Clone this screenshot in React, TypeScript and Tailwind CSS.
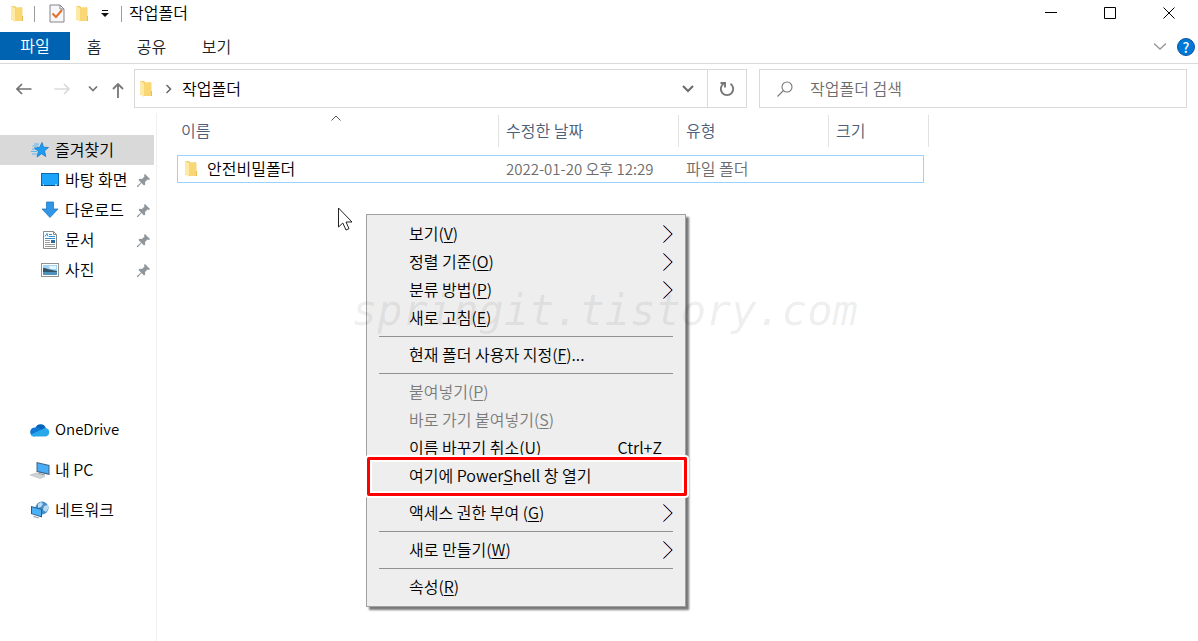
import type { ReactNode } from "react";

function Folder() {
  return (
    <svg width="14" height="18" viewBox="0 0 14 18" className="shrink-0" aria-hidden="true">
      <path d="M1 1h4l1 1h6v13H1z" fill="#f4cf6c" />
      <path d="M6 2h5v9H6z" fill="#fae29b" />
      <path d="M1 1l4 2v14l-4-3z" fill="#ffe9a6" />
      <path d="M5 6c0-2 1-3 2-3h5.500v13H5z" fill="#f9d775" />
      <path d="M12 11h1v5h-1z" fill="#e9bd55" />
    </svg>
  );
}

function Pin() {
  return (
    <svg width="13" height="13" viewBox="0 0 13 13" className="shrink-0" aria-hidden="true">
      <path d="M8 0l5 5-1 1-1.500-.5L8 8l.3 2.500L7 11.500 4.500 9 1 13H0v-1l4-3.500L1.500 6l1-1.300L5 5l2.500-2.500L7 1z" fill="#8f969c" />
    </svg>
  );
}

function Star() {
  return (
    <svg width="18" height="16" viewBox="0 0 18 16" aria-hidden="true">
      <path d="M3 2h5M1.500 4h6M1 7h4.500M0 9.500h6M1 12h5" stroke="#5db7ef" />
      <path d="M11 .5l1.500 4.700 5 .3-4 3.200 1.300 5.800-4.300-2.800L6 15l1.500-5.500L3.500 6l5-.5z" fill="#1e9df0" stroke="#1678c8" strokeWidth=".8" />
    </svg>
  );
}

function Desktop() {
  return (
    <svg width="18" height="14" viewBox="0 0 18 14" aria-hidden="true">
      <rect x=".5" y=".5" width="17" height="12" fill="#1ca4fb" stroke="#0d67ad" />
      <path d="M0 12h18v1H0z" fill="#0a4a86" />
      <path d="M2 12h1M14 12h2" stroke="#fff" />
    </svg>
  );
}

function Download() {
  return (
    <svg width="18" height="18" viewBox="0 0 18 18" aria-hidden="true">
      <path d="M5.500 1h7v7H17l-8 8.500L1 8h4.500z" fill="#3096e8" stroke="#2478bd" strokeWidth=".8" />
    </svg>
  );
}

function Doc() {
  return (
    <svg width="18" height="18" viewBox="0 0 18 18" aria-hidden="true">
      <path d="M2.500.5h10l3 3v14h-13z" fill="#fff" stroke="#8a8a8a" />
      <path d="M12.500.5v3h3" fill="none" stroke="#8a8a8a" />
      <path d="M4 5.500l2-3 1 3M8 3.500h3M4 7.500h10M8 5.500h6" fill="none" stroke="#2d8fd8" />
      <path d="M4 9.500h5M4 11.500h5M4 13.500h10M4 15.500h10" stroke="#9a9a9a" />
      <path d="M10 9h4v3h-4z" fill="#27689f" />
    </svg>
  );
}

function Picture() {
  return (
    <svg width="18" height="14" viewBox="0 0 18 14" aria-hidden="true">
      <rect x=".5" y=".5" width="17" height="13" fill="#fff" stroke="#929292" />
      <path d="M2 2h14v10H2z" fill="#9fd4f6" />
      <path d="M8 3h7v3H9z" fill="#e8f5fd" />
      <path d="M2 5c4 0 6 2 14 3v1H2z" fill="#31566b" />
      <path d="M2 9h14v3H2z" fill="#4f93bd" />
    </svg>
  );
}

function Cloud() {
  return (
    <svg width="20" height="14" viewBox="0 0 20 14" aria-hidden="true">
      <path d="M5.500 4.500A5.500 5.500 0 0 1 15.800 5L11 9z" fill="#0364b8" />
      <path d="M4 13.500A4.500 4.500 0 0 1 5.500 4.500c2-.6 3.500.2 5 1.300L15 9 4 13.500z" fill="#0f78d4" />
      <path d="M15.500 5a4.300 4.300 0 0 1 0 8.500H4c-1.500 0-2.700-.8-3.300-2L12 6.500A5 5 0 0 1 15.500 5z" fill="#28a8ea" />
    </svg>
  );
}

function Computer() {
  return (
    <svg width="20" height="18" viewBox="0 0 20 18" aria-hidden="true">
      <path d="M6.500 1l13 3v10l-13-3z" fill="#44627c" />
      <path d="M7.500 2.200l11 2.600v7.800l-11-2.600z" fill="#49acf7" />
      <path d="M9 12l6 1.500v1L8 13z" fill="#8d979e" />
      <path d="M0 14l6-2 9 3.500L10 17.500z" fill="#d0d3d5" stroke="#aeb2b5" strokeWidth=".5" />
    </svg>
  );
}

function Network() {
  return (
    <svg width="20" height="18" viewBox="0 0 20 18" aria-hidden="true">
      <circle cx="12" cy="7" r="6.500" fill="#4a8dc7" />
      <path d="M8 3l3-2 2 2-2 3-3 1zM14 5l4-1v4l-2 3-3-2z" fill="#b7dbf3" />
      <path d="M1 5l11 3v8.500L1 13z" fill="#2b5c86" />
      <path d="M2 6.200l9 2.500v6.500l-9-2.800z" fill="#4ab0f8" />
      <path d="M4 15l5 1.500v1L3 16z" fill="#9aa2a8" />
    </svg>
  );
}

function SideItem({ icon, label, pinned, className }: { icon: ReactNode; label: string; pinned?: boolean; className: string }) {
  return (
    <li>
      <a href="#" className={`mr-[2px] flex items-center ${className}`}>
        <span className="flex w-5 shrink-0 justify-center">{icon}</span>
        <span className="ml-[5px] flex-1 pb-[2px] whitespace-nowrap">{label}</span>
        {pinned && <Pin />}
      </a>
    </li>
  );
}

type Entry = { text: string; mnemonic?: string; tail?: string; sub?: boolean; disabled?: boolean; shortcut?: string; marked?: boolean };

const groups: Entry[][] = [
  [
    { text: "보기(", mnemonic: "V", tail: ")", sub: true },
    { text: "정렬 기준(", mnemonic: "O", tail: ")", sub: true },
    { text: "분류 방법(", mnemonic: "P", tail: ")", sub: true },
    { text: "새로 고침(", mnemonic: "E", tail: ")" },
  ],
  [{ text: "현재 폴더 사용자 지정(", mnemonic: "F", tail: ")..." }],
  [
    { text: "붙여넣기(", mnemonic: "P", tail: ")", disabled: true },
    { text: "바로 가기 붙여넣기(", mnemonic: "S", tail: ")", disabled: true },
    { text: "이름 바꾸기 취소(", mnemonic: "U", tail: ")", shortcut: "Ctrl+Z" },
    { text: "여기에 Power", mnemonic: "S", tail: "hell 창 열기", marked: true },
  ],
  [{ text: "액세스 권한 부여 (", mnemonic: "G", tail: ")", sub: true }],
  [{ text: "새로 만들기(", mnemonic: "W", tail: ")", sub: true }],
  [{ text: "속성(", mnemonic: "R", tail: ")" }],
];

function MenuRow({ e }: { e: Entry }) {
  return (
    <button
      role="menuitem"
      disabled={e.disabled}
      className={`relative flex h-7 w-full items-center pr-3 pl-[42px] text-left whitespace-nowrap ${e.marked ? "z-10" : ""} ${e.disabled ? "text-[#7b7b7b]" : "text-black"}`}
    >
      <span className="flex-1 pb-[2px]">
        {e.text}
        <span className="underline decoration-1 underline-offset-2">{e.mnemonic}</span>
        {e.tail}
      </span>
      {e.shortcut && <span className="mr-[11px] pb-[2px]">{e.shortcut}</span>}
      {e.sub && (
        <svg width="10" height="18" viewBox="0 0 10 18" fill="none" aria-hidden="true">
          <path d="M0 .5L8.500 9 0 17.500" stroke="#d98a4a" />
          <path d="M1 .5L9.500 9 1 17.500" stroke="#3c8fdc" />
          <path d="M.5.5L9 9 .5 17.500" stroke="#2a0c34" />
        </svg>
      )}
      {e.marked && (
        <span className="absolute -top-[5px] -right-[2px] -bottom-[6px] left-0 rounded-[2px] border-3 border-[#fe0000] shadow-[0_0_0_2px_#fff,inset_0_0_0_2px_#fff]" />
      )}
    </button>
  );
}

const th = "h-8 border-r border-[#e2e2e2] text-left font-[350] text-[#4c607a]";
const td = "h-7 border-y border-[#99d1ff] pl-[7px] text-[#6d6d6d]";

export default function App() {
  return (
    <div className="relative flex min-h-screen flex-col overflow-hidden bg-white font-['Noto_Sans_CJK_KR',sans-serif] text-base leading-6 font-[350] text-black">
      <header>
        <div className="flex h-8 items-start pl-[10px]">
          <div className="flex h-[27px] flex-1 items-center">
            <Folder />
            <span className="ml-[10px] h-4 w-px bg-[#9b9b9b]" />
            <button aria-label="속성" className="ml-[14px]">
              <svg width="16" height="19" viewBox="0 0 16 19" fill="none" aria-hidden="true">
                <path d="M1 1h10l4 4v13H1z" fill="#f7f7f9" stroke="#85858b" />
                <path d="M11 1v4h4" stroke="#85858b" />
                <path d="M3.500 9.500L7 13l6-7" stroke="#e3702a" strokeWidth="2" />
              </svg>
            </button>
            <button aria-label="새 폴더" className="ml-[10px]"><Folder /></button>
            <button aria-label="빠른 실행 도구 모음 사용자 지정" className="ml-3">
              <svg width="8" height="8" viewBox="0 0 8 8" aria-hidden="true"><path d="M1 0h6v1H1zM0 3h8L4 7z" fill="#111" /></svg>
            </button>
            <span className="ml-3 h-4 w-px bg-[#9b9b9b]" />
            <h1 className="ml-[7px] pb-[3px]">작업폴더</h1>
          </div>
          <div className="flex h-[26px] items-center gap-[47px] pr-[23px]">
            <button aria-label="최소화"><svg width="12" height="12" viewBox="0 0 12 12"><path d="M0 5.500h12" stroke="#000" /></svg></button>
            <button aria-label="최대화"><svg width="12" height="12" viewBox="0 0 12 12"><path d="M.5.5h11v11H.5z" fill="none" stroke="#000" /></svg></button>
            <button aria-label="닫기"><svg width="12" height="12" viewBox="0 0 12 12"><path d="M.5.5l11 11M11.500.5l-11 11" stroke="#000" /></svg></button>
          </div>
        </div>
        <nav className="flex h-8 items-start border-b border-[#dadada] text-[#222]">
          <button className="h-7 w-[70px] bg-[#0063b1] pb-[2px] text-white">파일</button>
          <button className="h-7 w-12">홈</button>
          <button className="h-7 w-[67px]">공유</button>
          <button className="h-7 w-[63px]">보기</button>
          <span className="flex-1" />
          <button aria-label="리본 메뉴 확장" className="mr-[11px] flex h-7 items-center">
            <svg width="12" height="7" viewBox="0 0 12 7" fill="none"><path d="M0 .5l6 5.500 6-5.500" stroke="#999" strokeWidth="1.300" /></svg>
          </button>
          <button aria-label="도움말" className="mt-[6px] mr-[3px] flex size-[18px] items-center justify-center rounded-full border border-[#0c56a0] bg-[#0078d7] text-sm leading-4 font-medium text-white">?</button>
        </nav>
        <div className="flex h-[49px] items-start pt-[5px] pr-[11px]">
          <div className="flex h-[39px] w-[134px] shrink-0 items-center pl-4">
            <button aria-label="뒤로"><svg width="16" height="12" viewBox="0 0 16 12" fill="none" stroke="#727272" strokeWidth="1.700"><path d="M15.500 6H1M6 1L1 6l5 5" /></svg></button>
            <button aria-label="앞으로" className="ml-[22px]"><svg width="16" height="12" viewBox="0 0 16 12" fill="none" stroke="#dadada" strokeWidth="1.700"><path d="M.5 6H15M10 1l5 5-5 5" /></svg></button>
            <button aria-label="최근 위치" className="ml-[18px]"><svg width="10" height="6" viewBox="0 0 10 6" fill="none" stroke="#777" strokeWidth="1.700"><path d="M1 .5L5 4.500 9 .5" /></svg></button>
            <button aria-label="위로" className="ml-[14px]"><svg width="12" height="15" viewBox="0 0 12 15" fill="none" stroke="#777" strokeWidth="1.800" className="mt-[3px]"><path d="M6 15V1M1 6l5-5 5 5" /></svg></button>
          </div>
          <div className="flex h-[39px] flex-[607] items-center border border-[#d9d9d9] pl-1">
            <Folder />
            <svg width="6" height="10" viewBox="0 0 6 10" fill="none" stroke="#666" strokeWidth="1.500" className="ml-[13px]"><path d="M.5 1l4 4-4 4" /></svg>
            <a href="#" className="ml-[10px] flex-1 pb-[2px]">작업폴더</a>
            <button aria-label="이전 위치" className="mr-[13px]"><svg width="12" height="8" viewBox="0 0 12 8" fill="none" stroke="#6b6b6b" strokeWidth="2"><path d="M1 1l5 5 5-5" /></svg></button>
            <button aria-label="새로 고침" className="flex h-full w-[39px] items-center justify-center border-l border-[#d9d9d9]">
              <svg width="16" height="16" viewBox="0 0 16 16" fill="none" stroke="#777" strokeWidth="1.900"><path d="M11.500 2.800a6.200 6.200 0 1 1-7 0M1.500 2H6v4.500" /></svg>
            </button>
          </div>
          <label className="ml-3 flex h-[39px] flex-[409] items-center border border-[#d9d9d9] pl-[17px]">
            <svg width="16" height="16" viewBox="0 0 16 16" fill="none" stroke="#777" strokeWidth="1.100" className="shrink-0"><circle cx="10" cy="6" r="5" /><path d="M6.500 9.500L.5 15.500" /></svg>
            <input aria-label="작업폴더 검색" placeholder="작업폴더 검색" className="ml-[17px] min-w-0 flex-1 pb-[2px] outline-none placeholder:text-[#6d6d6d]" />
          </label>
        </div>
      </header>
      <div className="flex flex-1">
        <aside className="w-[157px] shrink-0 border-r border-[#f1f1f1] pt-[22px]">
          <ul>
            <SideItem icon={<Star />} label="즐겨찾기" className="h-[30px] bg-[#d9d9d9] pl-[30px]" />
            <SideItem icon={<Desktop />} label="바탕 화면" pinned className="h-[30px] pr-1 pl-10" />
            <SideItem icon={<Download />} label="다운로드" pinned className="h-[30px] pr-1 pl-10" />
            <SideItem icon={<Doc />} label="문서" pinned className="h-[30px] pr-1 pl-10" />
            <SideItem icon={<Picture />} label="사진" pinned className="h-[30px] pr-1 pl-10" />
          </ul>
          <ul className="mt-[125px]">
            <SideItem icon={<Cloud />} label="OneDrive" className="h-10 pl-[30px] text-[15px]" />
            <SideItem icon={<Computer />} label="내 PC" className="h-10 pl-[30px]" />
            <SideItem icon={<Network />} label="네트워크" className="h-10 pl-[30px]" />
          </ul>
        </aside>
        <main className="flex flex-1 items-start pt-[2px] pl-5">
          <table className="w-[747px] table-fixed border-separate border-spacing-0">
            <colgroup>
              <col className="w-[322px]" />
              <col className="w-[180px]" />
              <col className="w-[150px]" />
              <col />
            </colgroup>
            <thead>
              <tr>
                <th className={`${th} relative pb-[2px] pl-1`}>
                  이름
                  <svg width="10" height="6" viewBox="0 0 10 6" fill="none" stroke="#555" className="absolute top-0 left-[154px]"><path d="M.5 5.500L5 1l4.500 4.500" /></svg>
                </th>
                <th className={`${th} pb-[2px] pl-[7px]`}>수정한 날짜</th>
                <th className={`${th} pb-[2px] pl-[7px]`}>유형</th>
                <th className="pb-[2px] pl-[7px] text-left font-[350] text-[#4c607a]">크기</th>
              </tr>
              <tr aria-hidden="true"><td colSpan={4} className="h-2" /></tr>
            </thead>
            <tbody>
              <tr>
                <td className="h-7 border-y border-l border-[#99d1ff] pl-[6px]">
                  <span className="flex items-center gap-[9px]"><Folder /><span className="pb-[2px]">안전비밀폴더</span></span>
                </td>
                <td className={`${td} text-[15px]`}>2022-01-20 오후 12:29</td>
                <td className={`${td} pb-[2px]`}>파일 폴더</td>
                <td className="border-y border-r border-[#99d1ff]" />
              </tr>
            </tbody>
          </table>
          <span className="h-8 w-[5px] border-r border-[#e2e2e2]" />
        </main>
      </div>

      <div role="menu" className="absolute top-[214px] left-[366px] w-80 border border-[#a0a0a0] bg-[#eeeeee] py-[5px] shadow-[3px_3px_2px_#777]">
        {groups.map((group, i) => (
          <div key={i} role="group" className={i > 0 ? "relative pt-[9px]" : ""}>
            {i > 0 && !groups[i - 1].some((e) => e.marked) && <hr className="absolute inset-x-3 top-1 border-[#919191]" />}
            {group.map((e) => <MenuRow key={e.text} e={e} />)}
          </div>
        ))}
      </div>

      <svg width="16" height="25" viewBox="0 0 16 25" className="absolute top-[207px] left-[337px]" aria-hidden="true">
        <path d="M1.500 1v19l4.300-4 3.200 7 3-1.300-3-6.700h6z" fill="#fff" stroke="#222" />
      </svg>
      <p className="pointer-events-none absolute top-[284px] left-[352px] font-['DejaVu_Sans_Mono',monospace] text-[42px] leading-[54px] font-normal whitespace-nowrap text-black/8 italic">
        springit.tistory.com
      </p>
    </div>
  );
}
